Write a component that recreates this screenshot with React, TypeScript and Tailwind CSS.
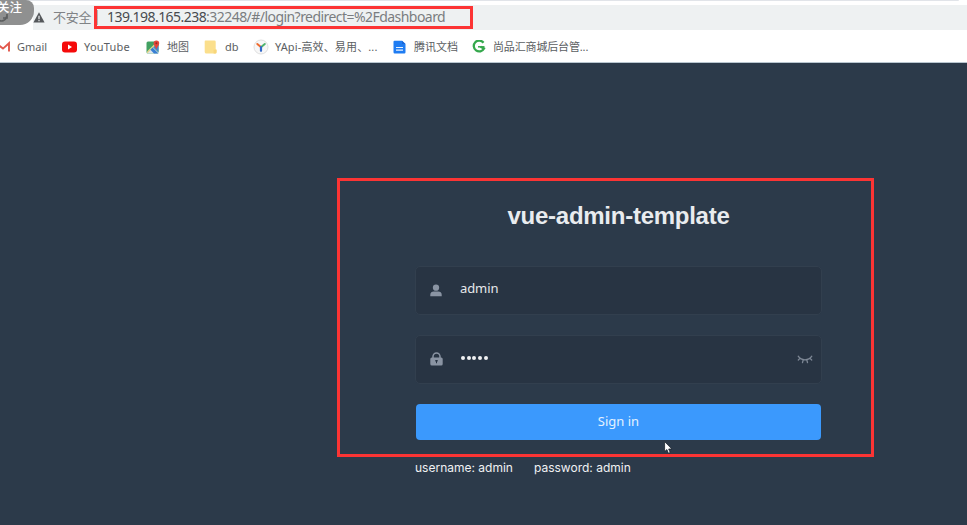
import type { ReactNode } from 'react';

const ui = "font-['Noto_Sans','Noto_Sans_CJK_SC',sans-serif]";

function Bookmark({ width, gap, icon, children }: { width: string; gap: string; icon: ReactNode; children: ReactNode }) {
  return (
    <a className={`flex h-full shrink-0 items-center whitespace-nowrap ${width} ${gap}`}>
      {icon}
      {children}
    </a>
  );
}

const GmailIcon = () => (
  <svg className="shrink-0" width="15" height="12" viewBox="0 0 15 12">
    <path d="M1.200 11V2.200L8 7.600 14 2.200V10.500" fill="none" stroke="#e2584c" strokeWidth="1.900" />
  </svg>
);
const YouTubeIcon = () => (
  <svg className="shrink-0" width="15" height="12" viewBox="0 0 15 12">
    <rect x="0" y=".5" width="15" height="11" rx="3" fill="#f50a0a" />
    <path d="M6 3.6v4.8L10 6Z" fill="#fff" />
  </svg>
);
const MapsIcon = () => (
  <svg className="shrink-0" width="14" height="14" viewBox="0 0 14 14">
    <rect x=".5" y="1.5" width="12" height="12" rx="1.5" fill="#42a162" />
    <path d="M1 13 7 7l5.500 5.500-.6 1H2Z" fill="#dce5ec" />
    <path d="M7 7 12.500 2v10Z" fill="#4285d6" />
    <path d="M1 11.500 8.500 4l1 1-7.700 8H1Z" fill="#e5d58c" />
    <path d="M6.600 7.500 12.500 13.500H8L4.400 9.800Z" fill="#387fd4" />
    <path d="M10.300 9.500C9.700 7 7.600 5.800 7.600 3.300a2.800 2.800 0 0 1 5.600 0c0 2.500-2.200 3.700-2.900 6.200Z" fill="#e6463a" />
    <circle cx="10.400" cy="3.300" r="1" fill="#8d2c27" />
  </svg>
);
const FolderIcon = () => (
  <svg className="shrink-0" width="13" height="14" viewBox="0 0 13 14">
    <path d="M1.500.5h9A1.200 1.200 0 0 1 11.700 1.700V9l.8.8v2.500a1.200 1.200 0 0 1-1.200 1.200h-9A1.600 1.600 0 0 1 .7 12V1.500a1 1 0 0 1 .8-1Z" fill="#fbdf8c" />
    <path d="M9.600 9.800h2.900v2.500a1.200 1.200 0 0 1-1.200 1.200H9.600Z" fill="#f8d67a" />
  </svg>
);
const YapiIcon = () => (
  <svg className="shrink-0" width="16" height="16" viewBox="0 0 16 16">
    <circle cx="8" cy="8" r="7" fill="#f7f7f7" stroke="#e0e0e0" />
    <path d="m4.300 5 3.300 2.800" stroke="#ef6b2e" strokeWidth="2" strokeLinecap="round" />
    <path d="M11.800 5 8.500 7.800" stroke="#4fb36e" strokeWidth="2" strokeLinecap="round" />
    <path d="M8 8v3.800" stroke="#3268c8" strokeWidth="2.200" strokeLinecap="round" />
  </svg>
);
const DocIcon = () => (
  <svg className="shrink-0" width="13" height="14" viewBox="0 0 13 14">
    <path d="M1.500.8h7.500L12.500 4v8.200a1.200 1.200 0 0 1-1.200 1.200H1.700A1.200 1.200 0 0 1 .5 12.200V1.800a1 1 0 0 1 1-1Z" fill="#1f7cf2" />
    <path d="M9 .8 12.500 4H9Z" fill="#1a66d6" />
    <path d="M3 7.500h7M3 10.200h7" stroke="#e8f2ff" strokeWidth="1.200" />
  </svg>
);
const MallIcon = () => (
  <svg className="shrink-0" width="14" height="14" viewBox="0 0 14 14">
    <path d="M11.500 2.800A5.400 5.400 0 1 0 12 8.500L8.500 6.800" fill="none" stroke="#35a84c" strokeWidth="2.300" />
    <path d="M6 6.800h6.500" stroke="#35a84c" strokeWidth="1.500" />
  </svg>
);

function Browser() {
  return (
    <header className={`flex h-[63px] flex-col border-b border-[#b9c6d0] bg-white text-[#5b5e62] ${ui}`}>
      <div className="h-px w-[959px] shrink-0 rounded-br bg-[#e1e4e9]" />
      <div className="relative mt-1 flex h-[25px] shrink-0 items-center bg-[#eef1f2]">
        <div className="h-full w-[33px] shrink-0 bg-white" />
        <svg className="shrink-0" width="12" height="11" viewBox="0 0 12 11">
          <path d="M6 .3 11.600 10.500H.4Z" fill="#55585b" />
          <path d="M6 3.700v3.500M6 8v1.200" stroke="#eef1f2" strokeWidth="1.200" />
        </svg>
        <span className="ml-2 w-[44px] shrink-0 whitespace-nowrap text-[13px] leading-none tracking-[-0.2px] text-[#808386]">不安全</span>
        <span className="h-[15px] w-px bg-[#b4b7ba]" />
        <span className="-mt-px ml-[9px] whitespace-nowrap text-[14px] leading-none tracking-[-0.55px] text-[#7a7d80]">
          <span className="text-[#484b4f]">139.198.165.238</span>:32248/#/login?redirect=%2Fdashboard
        </span>
        <div className="absolute left-[94px] top-px h-[23px] w-[379px] border-[3px] border-[#fc3434]" />
        <div className="absolute -left-3 -top-[5px] flex h-[25px] w-[46px] items-center overflow-hidden rounded-br-[14px] rounded-tr-[8px] bg-[#8f9090]">
          <svg className="absolute bottom-[2px] left-[9px]" width="12" height="12" viewBox="0 0 12 12">
            <path d="M1 8.500a5 5 0 0 0 8.500-3M10 3v4H6" fill="none" stroke="#5c5e5f" strokeWidth="1.700" />
          </svg>
          <span className="relative -mt-[8px] ml-[9px] whitespace-nowrap text-[12.500px] font-medium leading-none text-white">关注</span>
        </div>
      </div>
      <nav className="-ml-[5px] flex h-[33px] shrink-0 items-center text-[11px] leading-none">
        <Bookmark width="w-[67px]" gap="gap-[7px]" icon={<GmailIcon />}>Gmail</Bookmark>
        <Bookmark width="w-[84px]" gap="gap-[7px] tracking-[0.2px]" icon={<YouTubeIcon />}>YouTube</Bookmark>
        <Bookmark width="w-[58px]" gap="gap-[7px]" icon={<MapsIcon />}>地图</Bookmark>
        <Bookmark width="w-[49px]" gap="gap-[8px]" icon={<FolderIcon />}>db</Bookmark>
        <Bookmark width="w-[140px]" gap="gap-[6px] tracking-[0.14px]" icon={<YapiIcon />}>YApi-高效、易用、...</Bookmark>
        <Bookmark width="w-[79px]" gap="gap-[8px]" icon={<DocIcon />}>腾讯文档</Bookmark>
        <Bookmark width="w-[130px]" gap="gap-[7px] tracking-[-0.15px]" icon={<MallIcon />}>尚品汇商城后台管...</Bookmark>
      </nav>
    </header>
  );
}

const field = '-mx-px flex h-[49px] items-center rounded-[5px] border border-[#323f4e] bg-[#283443] px-[14px] text-[13px] text-[#e6e8eb]';

export default function App() {
  return (
    <div className="relative h-[525px] w-[967px] overflow-hidden bg-[#2c3a4a]">
      <Browser />
      <main className="ml-[416px] flex w-[405px] flex-col pt-[138px] font-['Noto_Sans',sans-serif]">
        <h1 className="h-[65px] text-center font-['Liberation_Sans',Arial,sans-serif] text-[24px] font-bold leading-[30px] tracking-[-0.26px] text-[#e9ecef]">
          vue-admin-template
        </h1>
        <div className={field}>
          <svg width="12" height="13" viewBox="0 0 13 13" fill="#8a94a3">
            <circle cx="6.500" cy="3.500" r="3.400" />
            <path d="M.3 12.800V11c0-2 1.700-3.300 3.700-3.300h5c2 0 3.700 1.300 3.700 3.300v1.800Z" />
          </svg>
          <span className="-mt-[3px] ml-[18px] tracking-[-0.1px]">admin</span>
        </div>
        <div className={`mt-[20px] ${field}`}>
          <svg className="-mt-px" width="13" height="14" viewBox="0 0 13 14">
            <path d="M3 6V4.500a3.500 3.500 0 0 1 7 0V6" fill="none" stroke="#8a94a3" strokeWidth="1.500" />
            <rect x=".3" y="5.500" width="12.400" height="8" rx="1.500" fill="#8a94a3" />
            <path d="M5.300 8h2.400v1.400H7v1.800H6V9.400h-.7Z" fill="#283443" />
          </svg>
          <span className="-mt-[3px] ml-[18px] flex gap-[1.700px]" aria-label="password">
            {[0, 1, 2, 3, 4].map((i) => (
              <i key={i} className="size-1 rounded-full bg-[#f0f1f3]" />
            ))}
          </span>
          <svg className="-mr-[6px] ml-auto" width="16" height="9" viewBox="0 0 16 9" fill="none" stroke="#7d8795" strokeWidth="1.300" strokeLinecap="round">
            <path d="M1.200 1.200c1.500 2.200 3.800 3.600 6.800 3.600s5.300-1.400 6.800-3.600M3 3.400 1.300 5M6.200 4.800 5.500 7.500M9.800 4.800l.7 2.700M13 3.400 14.700 5" />
          </svg>
        </div>
        <button className="mt-[20px] flex h-[36px] items-center justify-center rounded-[4px] bg-[#3b99fd] pb-px text-[13px] leading-none text-[#e4f1ff]">
          Sign in
        </button>
        <p className="-ml-px mt-[18px] flex whitespace-nowrap font-['Inter',sans-serif] text-[12px] leading-[20px] text-[#f0f1f3]">
          <span className="w-[119px]">username: admin</span>
          <span>password: admin</span>
        </p>
      </main>
      <div className="absolute left-[337px] top-[178px] h-[279px] w-[537px] border-[3px] border-[#fc3434]" />
      <svg className="absolute left-[664px] top-[441px]" width="9" height="13" viewBox="0 0 9 13">
        <path d="M.6.6v10l2.300-2 1.500 3.700 1.800-.8-1.500-3.500h3.200Z" fill="#fff" stroke="#1c2430" strokeWidth=".8" />
      </svg>
    </div>
  );
}
